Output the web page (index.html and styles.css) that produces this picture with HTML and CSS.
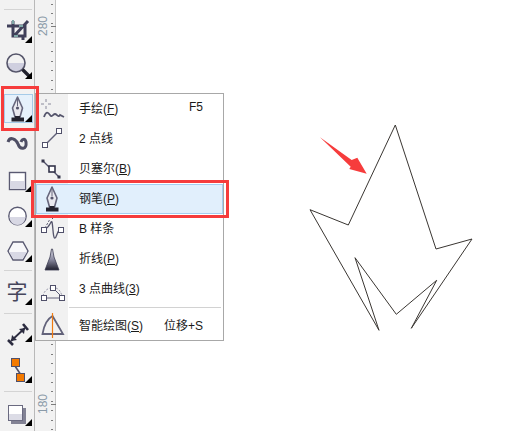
FILE: index.html
```html
<!DOCTYPE html>
<html>
<head>
    <title>钢笔工具</title>
    <link rel="stylesheet" href="styles.css">
</head>
<body>
    <svg class="defs" width="0" height="0">
        <defs>
            <linearGradient id="nibfade" x1="0" y1="0" x2="0" y2="1">
                <stop offset="0" stop-color="#dcdce6"/>
                <stop offset="0.5" stop-color="#8a8aa0"/>
                <stop offset="1" stop-color="#20202e"/>
            </linearGradient>
            <symbol id="pen" viewBox="0 0 30 30">
                <path d="M15.5 4 L20.5 15 L18 24 H13 L10.5 15 Z" fill="#e9e9ef" stroke="#66667c" stroke-width="1.6" stroke-linejoin="round"/>
                <path d="M15.5 5 V13" stroke="#66667c"/>
                <circle cx="15.5" cy="15" r="1.6" fill="#55556c"/>
                <path d="M13 23 H18 V24.5 H22 V28.5 H9.5 V24.5 H13 Z" fill="#23232f"/>
            </symbol>
        </defs>
    </svg>

    <div class="app">
        <div class="toolbar">
            <div class="sep"></div>

            <div class="tool has-more">
                <svg viewBox="0 0 34 35">
                    <path d="M7 12 H25 V22 H13 V7 M28 7 L14 22 M23 21 V26" fill="none" stroke="#40405a" stroke-width="3"/>
                    <path d="M13 6 V10 M19 12 H23 M14 22 H18" stroke="#7fa8a8" stroke-width="2"/>
                </svg>
            </div>
            <div class="tool tool-lens has-more">
                <svg viewBox="0 0 34 35">
                    <path d="M7.5 14 A8.5 8.5 0 0 0 24.5 14 Z" fill="#cfcfdf"/>
                    <circle cx="16" cy="14" r="9" fill="none" stroke="#55556a" stroke-width="1.6"/>
                    <path d="M22.5 20.5 L30 28" stroke="#22222e" stroke-width="3.4"/>
                </svg>
            </div>

            <div class="tool tool-pen tool-active has-more">
                <svg viewBox="0 0 34 35"><use href="#pen" x="2" y="2" width="30" height="30"/></svg>
            </div>
            <div class="tool">
                <svg viewBox="0 0 34 35">
                    <path d="M8 16 C10 10 16 13 18 18 C20 24 27 24 26 16 C25 12 22 13 21 16" fill="none" stroke="#4e4e64" stroke-width="3"/>
                </svg>
            </div>

            <div class="tool tool-rect has-more">
                <svg viewBox="0 0 34 35">
                    <rect x="9.5" y="9.5" width="16" height="17" fill="#fff" stroke="#5a5a72" stroke-width="1.4"/>
                    <rect x="10" y="18" width="15" height="8" fill="#d8d8e4"/>
                </svg>
            </div>
            <div class="tool has-more">
                <svg viewBox="0 0 34 35">
                    <circle cx="17.5" cy="18" r="8.7" fill="#fff" stroke="#5a5a72" stroke-width="1.4"/>
                    <path d="M9.5 19 A8 8 0 0 0 25.5 19 Z" fill="#d8d8e4"/>
                </svg>
            </div>
            <div class="tool has-more">
                <svg viewBox="0 0 34 35">
                    <path d="M8 18 L13 9 H23 L28 18 L23 27 H13 Z" fill="#f8f8fa" stroke="#5a5a72" stroke-width="1.4"/>
                    <path d="M9 19 H27 L22.5 26 H13.5 Z" fill="#d8d8e4"/>
                </svg>
            </div>

            <div class="sep sep-text"></div>
            <div class="tool tool-text has-more"><span class="zi">字</span></div>
            <div class="sep sep-dim"></div>

            <div class="tool tool-short tool-dim has-more">
                <svg viewBox="0 0 34 32">
                    <path d="M11 22 L25 9" stroke="#2c2c40" stroke-width="1.8"/>
                    <path d="M8 21 L13 26 M23 5 L28 11" stroke="#2c2c40" stroke-width="2.6"/>
                    <path d="M11 22 L12 16 L17 21 Z M25 9 L24 15 L19 10 Z" fill="#2c2c40"/>
                </svg>
            </div>
            <div class="tool tool-short tool-link has-more">
                <svg viewBox="0 0 34 32">
                    <path d="M15 15 L21 24" stroke="#50506a" stroke-width="1.6"/>
                    <rect x="11.5" y="7.5" width="8" height="8" fill="#f47a00" stroke="#50506a"/>
                    <rect x="16.5" y="22.5" width="8" height="8" fill="#f47a00" stroke="#50506a"/>
                </svg>
            </div>

            <div class="sep sep-shadow"></div>
            <div class="tool tool-shadow has-more">
                <svg viewBox="0 0 34 35">
                    <rect x="11" y="13" width="15" height="16" fill="#5c5c74" opacity="0.75"/>
                    <rect x="8.5" y="10.5" width="14" height="15" fill="#fff" stroke="#6a6a80"/>
                    <rect x="9" y="19" width="13" height="6" fill="#dcdce6"/>
                </svg>
            </div>
        </div>

        <div class="ruler">
            <span class="ruler-num ruler-num-top">280</span>
            <span class="ruler-num ruler-num-bottom">180</span>
        </div>

        <div class="canvas">
            <svg class="drawing" viewBox="56 0 458 431">
                <path d="M395.3 125 L436 249 L472 239 L411.3 328.3 L436.7 280.3 L396.3 314.3 L355 257.7 L379 330.3 L310 209.7 L348.3 225 Z" fill="none" stroke="#3a3632" stroke-width="1"/>
                <path d="M320 137.3 L351.7 160 L357.3 157.7 L366.7 173.7 L349.3 169 L350.7 166.7 Z" fill="#f63c3c"/>
            </svg>
        </div>
    </div>

    <div class="menu">
        <div class="menu-row">
            <svg class="menu-icon" viewBox="0 0 32 30">
                <path d="M10 5 V8 M10 12 V15 M5 10 H8 M12 10 H15" stroke="#8a8a9c"/>
                <path d="M8 23 C10 17 12 18 14 21 C16 24 17 20 19 20 C21 20 22 24 24 21 L28 23" fill="none" stroke="#55556c" stroke-width="1.8"/>
            </svg>
            <span class="menu-label">手绘(<u>F</u>)</span>
            <span class="menu-key">F5</span>
        </div>
        <div class="menu-row">
            <svg class="menu-icon" viewBox="0 0 32 30">
                <path d="M9 21 L23 7" stroke="#62627a" stroke-width="1.5"/>
                <rect x="6.5" y="18.5" width="5" height="5" fill="#fff" stroke="#50506a"/>
                <rect x="20.5" y="4.5" width="5" height="5" fill="#fff" stroke="#50506a"/>
            </svg>
            <span class="menu-label">2 点线</span>
        </div>
        <div class="menu-row">
            <svg class="menu-icon" viewBox="0 0 32 30">
                <path d="M7 7 L23 23" stroke="#50506a" stroke-width="1.3"/>
                <rect x="5.5" y="5.5" width="3" height="3" fill="#34344a"/>
                <rect x="21.5" y="21.5" width="3" height="3" fill="#34344a"/>
                <rect x="13" y="12" width="6" height="6" fill="#fff" stroke="#34344a" stroke-width="1.6"/>
            </svg>
            <span class="menu-label">贝塞尔(<u>B</u>)</span>
        </div>
        <div class="menu-row menu-row-active">
            <svg class="menu-icon" viewBox="0 0 32 30"><use href="#pen" x="0.5" y="-1" width="30" height="30"/></svg>
            <span class="menu-label">钢笔(<u>P</u>)</span>
        </div>
        <div class="menu-row">
            <svg class="menu-icon" viewBox="0 0 32 30">
                <path d="M9 14 L14 5 M16 4 L17 5" stroke="#55556c" stroke-dasharray="2 1.5" fill="none"/>
                <path d="M9 15 C14 13 15 6 16 8 C17 12 17 25 19 24 C21 23 21 16 25 15" fill="none" stroke="#55556c" stroke-width="1.3"/>
                <rect x="5.5" y="13.5" width="5" height="5" fill="#fff" stroke="#50506a"/>
                <rect x="22.5" y="13.5" width="5" height="5" fill="#fff" stroke="#50506a"/>
            </svg>
            <span class="menu-label">B 样条</span>
        </div>
        <div class="menu-row">
            <svg class="menu-icon" viewBox="0 0 32 30">
                <path d="M15.5 5 H16.5 L18 13 L23 26 H9 L14 13 Z" fill="url(#nibfade)" stroke="#3e3e54" stroke-width="0.8"/>
            </svg>
            <span class="menu-label">折线(<u>P</u>)</span>
        </div>
        <div class="menu-row">
            <svg class="menu-icon" viewBox="0 0 32 30">
                <path d="M7 22 C8 17 11 15 14 14 M20 14 C23 15 25 18 26 22" fill="none" stroke="#9a9aac" stroke-dasharray="2 1.5"/>
                <path d="M9 24 H24 M19 16 L25 22" stroke="#60607a"/>
                <rect x="5.5" y="21.5" width="5" height="5" fill="#fff" stroke="#50506a"/>
                <rect x="14.5" y="11.5" width="5" height="5" fill="#fff" stroke="#50506a"/>
                <rect x="23.5" y="21.5" width="5" height="5" fill="#fff" stroke="#50506a"/>
            </svg>
            <span class="menu-label">3 点曲线(<u>3</u>)</span>
        </div>
        <div class="menu-sep"></div>
        <div class="menu-row menu-row-last">
            <svg class="menu-icon" viewBox="0 0 32 30">
                <path d="M6.5 24 C8 15 11 9 16.5 6 L27 24 Z" fill="none" stroke="#62627a" stroke-width="1.8"/>
                <path d="M16.5 3 V28" stroke="#f07a10" stroke-width="1.2"/>
            </svg>
            <span class="menu-label">智能绘图(<u>S</u>)</span>
            <span class="menu-key">位移+S</span>
        </div>
    </div>

    <div class="mark mark-tool"></div>
    <div class="mark mark-row"></div>
</body>
</html>
```

FILE: styles.css
```css
html, body {
    margin: 0;
    height: 431px;
    overflow: hidden;
    background-color: #fff;
    font-family: "Liberation Sans", "Noto Sans CJK SC", sans-serif;
}

.defs {
    position: absolute;
}

.app {
    display: flex;
    height: 431px;
}

/* left tool strip */
.toolbar {
    width: 35px;
    flex: none;
    padding-top: 9px;
    box-sizing: border-box;
    background-color: #f2f2f2;
    border-right: 1px solid #b9b9b9;
}

.sep {
    height: 1px;
    margin: 0 2px 4px 4px;
    background-color: #d4d4d4;
}

.sep-text {
    margin-top: 2px;
    margin-bottom: 2px;
}

.sep-dim {
    margin-top: 5px;
    margin-bottom: 5px;
}

.sep-shadow {
    margin-top: 8px;
    margin-bottom: 3px;
}

.tool {
    position: relative;
    width: 34px;
    height: 35px;
}

.tool svg {
    display: block;
    width: 34px;
    height: 100%;
}

.tool-short {
    height: 32px;
}

.tool-pen {
    margin-top: 7px;
}

.tool-rect {
    margin-top: 2px;
}

.tool-active::before {
    content: "";
    position: absolute;
    top: 3px;
    left: 4px;
    width: 27px;
    height: 27px;
    background-color: #e6f1fb;
    border: 1px solid #a6cbe8;
}

.tool-active svg {
    position: relative;
}

.has-more::after {
    content: "";
    position: absolute;
    right: 2px;
    bottom: 6px;
    border-style: solid;
    border-width: 0 0 7px 7px;
    border-color: transparent transparent #000 transparent;
}

.tool-lens::after {
    bottom: 5px;
}

.tool-pen::after {
    bottom: 4px;
}

.tool-text::after {
    bottom: 3px;
}

.tool-dim::after {
    bottom: 9px;
}

.tool-link::after {
    bottom: 0;
}

.tool-shadow::after {
    bottom: 4px;
}

.zi {
    display: block;
    text-align: center;
    font-family: "Noto Sans CJK SC", sans-serif;
    font-size: 21px;
    line-height: 35px;
    color: #46465c;
}

/* ruler */
.ruler {
    position: relative;
    width: 20px;
    flex: none;
    background-color: #f2f2f2;
    border-right: 1px solid #c4c4c4;
    background-image: repeating-linear-gradient(to bottom, #7c7c7c 0, #7c7c7c 1px, transparent 1px, transparent 9.45px);
    background-size: 2px 100%;
    background-position: 16px 4px;
    background-repeat: no-repeat;
}

.ruler-num {
    position: absolute;
    left: -3px;
    width: 22px;
    height: 12px;
    font-size: 12px;
    line-height: 12px;
    text-align: center;
    color: #8a9aa8;
    transform: rotate(-90deg);
}

.ruler-num-top {
    top: 20px;
}

.ruler-num-bottom {
    top: 398px;
}

.ruler-num::after {
    content: "";
    position: absolute;
    left: 10px;
    top: 14px;
    width: 1px;
    height: 6px;
    background-color: #7c7c7c;
}

.canvas {
    position: relative;
    flex: 1;
    background-color: #fff;
}

.drawing {
    position: absolute;
    top: 0;
    left: 0;
    width: 458px;
    height: 431px;
}

/* flyout */
.menu {
    position: absolute;
    top: 93px;
    left: 35px;
    width: 187px;
    height: 246px;
    border: 1px solid #a8a8a8;
    background: linear-gradient(to right, #f1f1f1 32px, #fff 32px);
}

.menu-row {
    display: flex;
    align-items: center;
    height: 30px;
    box-sizing: border-box;
    padding-right: 20px;
    font-size: 12px;
    color: #1a1a1a;
}

.menu-icon {
    width: 32px;
    height: 30px;
    flex: none;
}

.menu-label {
    margin-left: 11px;
    padding-bottom: 4px;
}

.menu-label u {
    text-underline-offset: 1px;
}

.menu-key {
    margin-left: auto;
    padding-bottom: 4px;
}

.menu-row-last .menu-label,
.menu-row-last .menu-key {
    padding-bottom: 2px;
}

.menu-row-active {
    background-color: #e1effc;
    box-shadow: inset 0 0 0 1px #a5cdf0;
}

.menu-sep {
    height: 1px;
    margin: 3px 2px 2px 33px;
    background-color: #d2d2d2;
}

/* red highlight boxes drawn over the screenshot */
.mark {
    position: absolute;
    box-sizing: border-box;
    border: 3px solid #f63c3c;
}

.mark-tool {
    top: 86px;
    left: 1px;
    width: 38px;
    height: 45px;
}

.mark-row {
    top: 180px;
    left: 31px;
    width: 198px;
    height: 38px;
}
```
